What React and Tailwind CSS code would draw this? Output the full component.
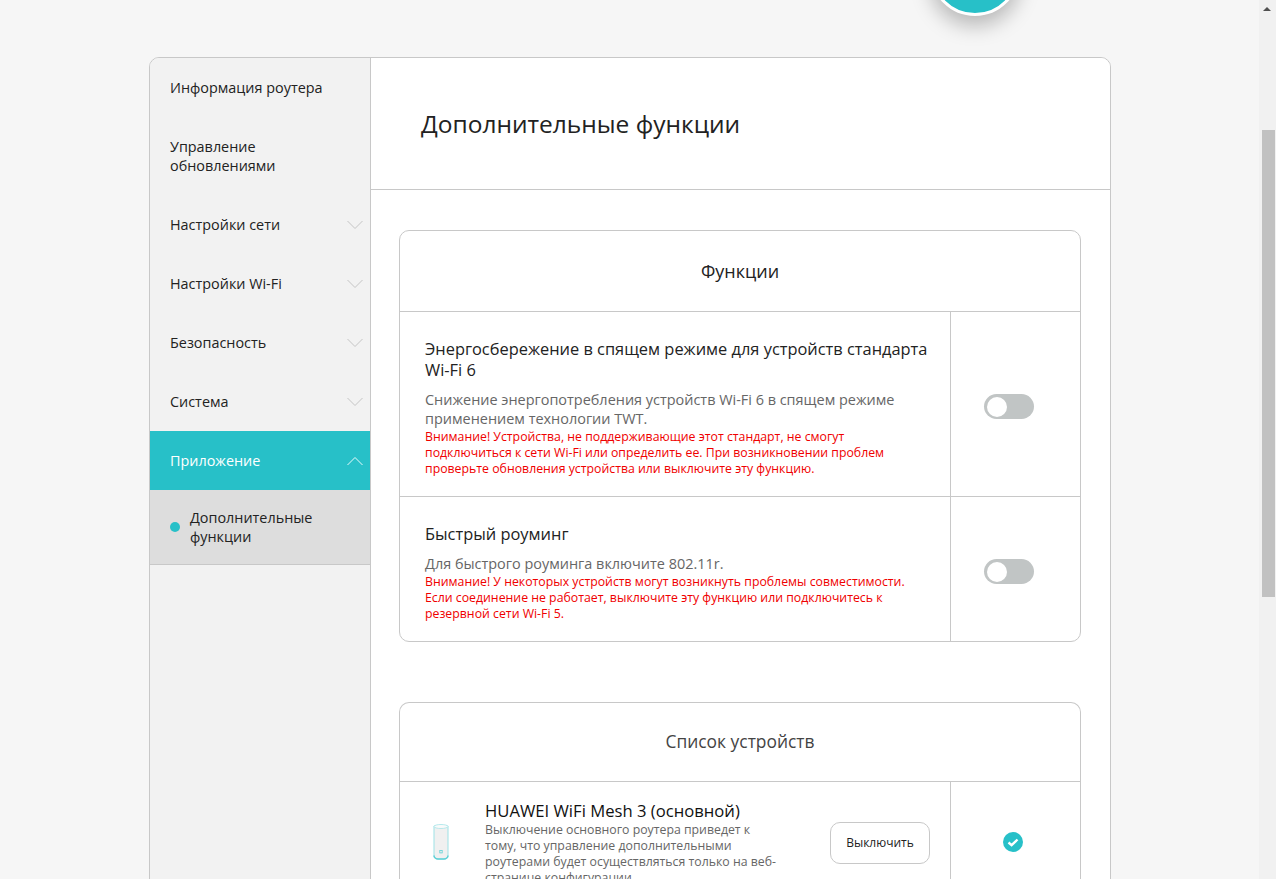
import React from "react";

const menu = [
  { label: "Информация роутера", h: "h-[59px]" },
  { label: <>Управление<br />обновлениями</>, h: "h-[78px]" },
  { label: "Настройки сети", h: "h-[59px]", arrow: true },
  { label: "Настройки Wi-Fi", h: "h-[59px]", arrow: true },
  { label: "Безопасность", h: "h-[59px]", arrow: true },
  { label: "Система", h: "h-[59px]", arrow: true },
];

const Chevron = ({ up, color }) => (
  <svg width="16" height="9" viewBox="0 0 16 9" fill="none" className="absolute right-[7px] top-1/2 -translate-y-1/2">
    <path d={up ? "M0.5 8.5L8 1L15.5 8.5" : "M0.5 0.5L8 8L15.5 0.5"} stroke={color} strokeWidth="1" />
  </svg>
);

const Toggle = () => (
  <div className="flex h-[25px] w-[50px] items-center rounded-full bg-[#c1c5c5] pl-[3px]">
    <div className="h-[20px] w-[20px] rounded-full bg-white" />
  </div>
);

const SectionTitle = ({ children, className }) => (
  <div className={`flex items-center justify-center border-b border-[#c8c8c8] ${className}`}>
    {children}
  </div>
);

const Feature = ({ title, desc, warn, className, last }) => (
  <div className={`flex ${last ? "" : "border-b border-[#c8c8c8]"} ${className}`}>
    <div className="w-[551px] border-r border-[#c8c8c8] pl-[25px] pr-[10px] pt-[26px]">
      <div className="text-[16.4px] leading-[21px] text-[#222]">{title}</div>
      <div className="mt-[10px] text-[14.45px] leading-[19px] text-[#666]">{desc}</div>
      <div className="mt-[1px] text-[12.3px] leading-[16px] text-[#f00000]">{warn}</div>
    </div>
    <div className="flex flex-1 items-center justify-center pr-[13px] pt-[5px]">
      <Toggle />
    </div>
  </div>
);

export default function App() {
  return (
    <div className="relative flex h-[879px] overflow-hidden bg-[#f6f6f6] font-['Open_Sans','Noto_Sans',sans-serif] text-[#222]">
      <div className="absolute left-[930px] top-[-74px] h-[90px] w-[90px] rounded-full border-[3px] border-white bg-[#27c0c8] shadow-[0_10px_20px_rgba(0,0,0,0.25)]" />

      <div className="flex-1 overflow-hidden pl-[149px] pt-[57px]">
        <div className="flex w-[962px] overflow-hidden rounded-t-[10px] border border-[#c8c8c8]">
          <aside className="w-[221px] shrink-0 border-r border-[#c8c8c8] bg-[#f2f2f2] text-[14.4px] leading-[19px]">
            {menu.map((item, i) => (
              <div key={i} className={`relative flex items-center pl-[20px] ${item.h}`}>
                <span>{item.label}</span>
                {item.arrow && <Chevron color="#c4c4c4" />}
              </div>
            ))}
            <div className="relative flex h-[59px] items-center bg-[#27c0c8] pl-[20px] text-white">
              <span>Приложение</span>
              <Chevron up color="#e8fbfc" />
            </div>
            <div className="flex h-[75px] items-center border-b border-[#c8c8c8] bg-[#dddddd] pl-[20px]">
              <span className="mr-[10px] h-[10px] w-[10px] rounded-full bg-[#27c0c8]" />
              <span>Дополнительные<br />функции</span>
            </div>
            <div className="h-[400px]" />
          </aside>

          <main className="flex-1 bg-white">
            <div className="flex h-[132px] items-center border-b border-[#c8c8c8] pl-[50px] pt-[2px] text-[24.5px]">
              Дополнительные функции
            </div>

            <div className="px-[28px] pt-[40px]">
              <section className="w-[682px] rounded-[10px] border border-[#c8c8c8]">
                <SectionTitle className="h-[81px] text-[18px]">Функции</SectionTitle>
                <Feature
                  className="h-[185px]"
                  title={<>Энергосбережение в спящем режиме для устройств стандарта<br />Wi-Fi 6</>}
                  desc={<>Снижение энергопотребления устройств Wi-Fi 6 в спящем режиме<br />применением технологии TWT.</>}
                  warn={<>Внимание! Устройства, не поддерживающие этот стандарт, не смогут<br />подключиться к сети Wi-Fi или определить ее. При возникновении проблем<br />проверьте обновления устройства или выключите эту функцию.</>}
                />
                <Feature
                  last
                  className="h-[144px]"
                  title="Быстрый роуминг"
                  desc="Для быстрого роуминга включите 802.11r."
                  warn={<>Внимание! У некоторых устройств могут возникнуть проблемы совместимости.<br />Если соединение не работает, выключите эту функцию или подключитесь к<br />резервной сети Wi-Fi 5.</>}
                />
              </section>

              <section className="mt-[60px] w-[682px] rounded-t-[10px] border border-b-0 border-[#c8c8c8]">
                <SectionTitle className="h-[79px] pb-[1px] text-[17.4px] text-[#444]">Список устройств</SectionTitle>
                <div className="flex h-[200px]">
                  <div className="flex w-[551px] border-r border-[#c8c8c8]">
                    <div className="w-[85px] shrink-0 pl-[33px] pt-[41px]">
                      <svg width="16" height="37" viewBox="0 0 16 37" fill="none">
                        <path d="M1 3.500C1 1.800 15 1.800 15 3.500V32c0 2.500-2 4-4 4H5c-2 0-4-1.500-4-4Z" fill="#f0f0f0" stroke="#a6e4e8" strokeWidth="1.1" />
                        <ellipse cx="8" cy="3.500" rx="7" ry="2" fill="#fafafa" stroke="#a6e4e8" strokeWidth="0.8" />
                        <path d="M1 32.500c0 2 2 3.500 4 3.500h6c2 0 4-1.500 4-3.500" stroke="#5fd0d6" strokeWidth="1.6" />
                        <rect x="6.800" y="27.500" width="2.400" height="2.400" stroke="#5fd0d6" strokeWidth="0.8" />
                      </svg>
                    </div>
                    <div className="w-[300px] pt-[18px]">
                      <div className="text-[16.65px] leading-[21px] text-[#111]">HUAWEI WiFi Mesh 3 (основной)</div>
                      <div className="mt-[1px] text-[12.3px] leading-[16px] text-[#666]">
                        Выключение основного роутера приведет к<br />
                        тому, что управление дополнительными<br />
                        роутерами будет осуществляться только на веб-<br />
                        странице конфигурации.
                      </div>
                    </div>
                    <div className="ml-[45px] pt-[40px]">
                      <button className="h-[42px] w-[100px] rounded-[10px] border border-[#c8c8c8] bg-white text-[12px]">
                        Выключить
                      </button>
                    </div>
                  </div>
                  <div className="flex flex-1 justify-center pr-[5px] pt-[50px]">
                    <svg width="20" height="20" viewBox="0 0 20 20">
                      <circle cx="10" cy="10" r="10" fill="#27c0c8" />
                      <path d="M5.500 10.500L8.600 13.200L14.500 7.500" stroke="#fff" strokeWidth="2.400" fill="none" />
                    </svg>
                  </div>
                </div>
              </section>
            </div>
          </main>
        </div>
      </div>

      <div className="relative flex w-[17px] shrink-0 flex-col items-center bg-[#f1f1f1] pt-[130px]">
        <div className="absolute left-[4px] top-[7px] h-0 w-0 border-x-[4px] border-b-[4px] border-x-transparent border-b-[#505050]" />
        <div className="ml-[1px] h-[467px] w-[13px] bg-[#c1c1c1]" />
      </div>
    </div>
  );
}
